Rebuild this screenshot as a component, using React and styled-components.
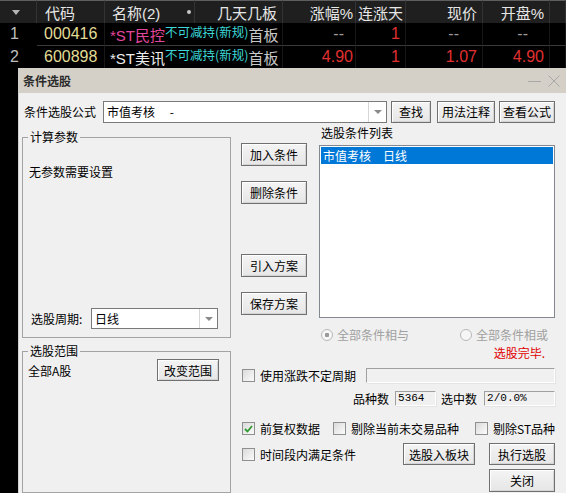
import React from 'react';
import styled, { createGlobalStyle } from 'styled-components';

const GlobalStyle = createGlobalStyle`
  html, body {
    margin: 0;
    padding: 0;
    background: #000;
    overflow: hidden;
  }
  body {
    font-family: 'Noto Sans CJK SC', 'Liberation Sans', sans-serif;
  }
`;

const Page = styled.div`
  position: relative;
  width: 566px;
  height: 493px;
  background: #000;
  overflow: hidden;
`;

/* ---------- quote table ---------- */

const COLS = '37px 68px 90px 88px 73px 50px 77px 67px 1fr';

const Table = styled.div`
  display: grid;
  grid-template-columns: ${COLS};
  font-family: 'Liberation Sans', 'Noto Sans CJK SC', sans-serif;
`;

const HeadCell = styled.div`
  box-sizing: border-box;
  height: 23px;
  background: #1f1f1f;
  border-top: 1px solid #5e5e5e;
  border-right: 1px solid #333;
  color: #e6e6e6;
  font-size: 15px;
  display: flex;
  align-items: center;
  justify-content: ${(p) => p.$align || 'flex-end'};
  padding: 0 ${(p) => (p.$pr != null ? p.$pr : 5)}px 0 ${(p) => (p.$pl != null ? p.$pl : 5)}px;
  white-space: nowrap;
`;

const SortArrow = styled.span`
  width: 0;
  height: 0;
  border-left: 4px solid transparent;
  border-right: 4px solid transparent;
  border-top: 5px solid #b4b4b4;
`;

const Dot = styled.span`
  width: 4px;
  height: 4px;
  border-radius: 50%;
  background: #c8c8c8;
`;

const Cell = styled.div`
  box-sizing: border-box;
  height: 23px;
  border-bottom: 1px solid ${(p) => (p.$first ? 'transparent' : '#3a3a3a')};
  border-right: 1px solid ${(p) => (p.$first ? 'transparent' : '#181818')};
  color: ${(p) => p.$color || '#e03030'};
  font-size: 16px;
  display: flex;
  align-items: center;
  justify-content: ${(p) => p.$align || 'flex-end'};
  padding: 0 ${(p) => (p.$pr != null ? p.$pr : 5)}px 0 ${(p) => (p.$pl != null ? p.$pl : 0)}px;
  white-space: nowrap;
  grid-column: ${(p) => (p.$span ? `span ${p.$span}` : 'auto')};
`;

const StockName = styled.span`
  font-size: 15px;
  color: ${(p) => p.$color};
`;

const Tag = styled.span`
  align-self: flex-start;
  margin-top: 1px;
  font-size: 12.5px;
  line-height: 15px;
  color: #3cd6d6;
  font-family: 'Noto Sans CJK SC', sans-serif;
`;

const Board = styled.span`
  margin-left: auto;
  font-size: 15px;
  color: #c8c8c8;
`;

const Dash = styled.span`
  color: #9a9a9a;
  margin-right: ${(p) => p.$mr}px;
`;

/* ---------- dialog ---------- */

const Dialog = styled.div`
  position: absolute;
  left: 18px;
  top: 68px;
  width: 548px;
  height: 425px;
  box-sizing: border-box;
  background: #f0f0f0;
  border-left: 1px solid #d0d0d0;
  font-family: 'Noto Sans CJK SC', sans-serif;
  font-size: 12px;
  color: #000;
`;

const TitleBar = styled.div`
  height: 25px;
  background: #d4d0c8;
  display: flex;
  align-items: center;
  padding: 0 6px 0 4px;
`;

const Title = styled.span`
  font-weight: bold;
  color: #2a2a2a;
  font-size: 12px;
`;

const WinControls = styled.div`
  margin-left: auto;
  display: flex;
  align-items: center;
  gap: 7px;
`;

const Body = styled.div`
  padding: 7px 11px 0 3px;
`;

const FormulaRow = styled.div`
  display: flex;
  align-items: center;
  height: 23px;
`;

const FieldLabel = styled.span`
  width: ${(p) => p.$w}px;
  padding-left: ${(p) => p.$pl || 0}px;
  box-sizing: border-box;
  line-height: 14px;
  white-space: nowrap;
`;

const Combo = styled.div`
  box-sizing: border-box;
  width: ${(p) => p.$w}px;
  height: ${(p) => p.$h}px;
  background: #fff;
  border: 1px solid #7a7a7a;
  display: flex;
  margin-right: ${(p) => p.$mr || 0}px;
`;

const ComboText = styled.span`
  flex: 1;
  padding-left: 3px;
  display: flex;
  align-items: center;
  white-space: pre;
`;

const ComboDrop = styled.span`
  width: 17px;
  border-left: 1px solid #d6d6d6;
  display: flex;
  align-items: center;
  justify-content: center;
  &::after {
    content: '';
    border-left: 4px solid transparent;
    border-right: 4px solid transparent;
    border-top: 4px solid #8a8a8a;
  }
`;

const Button = styled.button`
  box-sizing: border-box;
  width: ${(p) => p.$w}px;
  height: ${(p) => p.$h || 22}px;
  margin: 0 0 0 ${(p) => p.$ml || 0}px;
  padding: 0;
  font-family: 'Noto Sans CJK SC', sans-serif;
  font-size: 12px;
  color: #000;
  background: linear-gradient(#f4f4f4, #e6e6e6);
  border: 1px solid #707070;
  box-shadow: inset 1px 1px 0 #fff, inset -1px -1px 0 #d4d4d4;
  display: flex;
  align-items: center;
  justify-content: center;
  flex-shrink: 0;
`;

const Main = styled.div`
  display: grid;
  grid-template-columns: 209px 1fr;
  column-gap: 10px;
`;

const LeftCol = styled.div`
  padding-top: 7px;
`;

const Group = styled.fieldset`
  margin: ${(p) => p.$mt || 0}px 0 0 0;
  padding: 0 5px;
  border: 1px solid #a3a3a3;
  min-width: 0;
`;

const Legend = styled.legend`
  padding: 0 2px;
  font-size: 12px;
  line-height: 14px;
`;

const GroupInner = styled.div`
  height: ${(p) => p.$h}px;
  display: flex;
  flex-direction: column;
  box-sizing: border-box;
  padding: ${(p) => p.$pt}px 0 ${(p) => p.$pb || 0}px 0;
`;

const Note = styled.div`
  line-height: 14px;
  padding-left: 1px;
`;

const PeriodRow = styled.div`
  margin-top: auto;
  display: flex;
  align-items: center;
  padding-left: 3px;
`;

const RangeRow = styled.div`
  margin-top: 1px;
  display: flex;
  align-items: center;
  justify-content: space-between;
  padding-right: 6px;
`;

const RightCol = styled.div`
  display: flex;
  flex-direction: column;
`;

const TopSection = styled.div`
  display: grid;
  grid-template-columns: 66px 1fr;
  column-gap: 12px;
`;

const ButtonStack = styled.div`
  padding-top: 20px;
  display: flex;
  flex-direction: column;
`;

const StackGap = styled.div`
  height: ${(p) => p.$h}px;
`;

const ListCol = styled.div`
  padding-top: 3px;
`;

const ListLabel = styled.div`
  line-height: 14px;
  padding-left: 2px;
`;

const ListBox = styled.div`
  box-sizing: border-box;
  margin-top: 5px;
  height: 173px;
  background: #fff;
  border: 1px solid #828790;
  padding: 1px;
`;

const ListItem = styled.div`
  height: 17px;
  background: ${(p) => (p.$selected ? '#0078d7' : 'transparent')};
  color: ${(p) => (p.$selected ? '#fff' : '#000')};
  display: flex;
  align-items: center;
  padding-left: 2px;
  white-space: pre;
`;

const RadioRow = styled.div`
  margin-top: 8px;
  height: 14px;
  display: grid;
  grid-template-columns: 139px auto;
  padding-left: 2px;
  margin-left: 78px;
`;

const Radio = styled.span`
  display: flex;
  align-items: center;
  gap: 4px;
  color: #a0a0a0;
  white-space: nowrap;
  &::before {
    content: '';
    box-sizing: border-box;
    width: 12px;
    height: 12px;
    border-radius: 50%;
    border: 1px solid #b8b8b8;
    background: ${(p) =>
      p.$on ? 'radial-gradient(circle, #9a9a9a 0 2px, #f6f6f6 2.5px)' : '#f6f6f6'};
  }
`;

const Status = styled.div`
  margin-top: 6px;
  line-height: 14px;
  text-align: right;
  padding-right: 10px;
  color: #e00000;
`;

const Row = styled.div`
  margin-top: ${(p) => p.$mt}px;
  height: ${(p) => p.$h || 14}px;
  display: flex;
  align-items: center;
  justify-content: ${(p) => p.$justify || 'flex-start'};
  padding-left: ${(p) => p.$pl || 0}px;
`;

const CheckRow = styled.div`
  margin-top: 14px;
  height: 14px;
  display: grid;
  grid-template-columns: 91px 142px auto;
  align-items: center;
  padding-left: 1px;
`;

const ActionRow = styled.div`
  margin-top: 9px;
  height: 22px;
  display: grid;
  grid-template-columns: 1fr 72px 66px;
  column-gap: 14px;
  align-items: center;
  padding-left: 1px;
`;

const CheckLabel = styled.span`
  display: flex;
  align-items: center;
  gap: 5px;
  white-space: nowrap;
`;

const Box = styled.span`
  box-sizing: border-box;
  width: 13px;
  height: 13px;
  flex-shrink: 0;
  border: 1px solid #8e8f8f;
  background: linear-gradient(135deg, #dadada, #fbfbfb);
  display: flex;
  align-items: center;
  justify-content: center;
`;

const Sunken = styled.span`
  box-sizing: border-box;
  height: 15px;
  width: ${(p) => (p.$w ? `${p.$w}px` : 'auto')};
  flex: ${(p) => (p.$grow ? 1 : 'none')};
  margin-left: ${(p) => p.$ml || 0}px;
  background: #f0f0f0;
  border-top: 1px solid #a0a0a0;
  border-left: 1px solid #a0a0a0;
  border-bottom: 1px solid #fff;
  border-right: 1px solid #fff;
  box-shadow: 1px 1px 0 #e4e4e4;
  font-family: 'Liberation Mono', monospace;
  font-size: 11px;
  line-height: 13px;
  padding-left: 2px;
`;

const CountLabel = styled.span`
  margin-left: ${(p) => p.$ml || 0}px;
  line-height: 14px;
`;

const Checkbox = ({ checked, children }) => (
  <CheckLabel>
    <Box>
      {checked && (
        <svg width="9" height="8" viewBox="0 0 9 8">
          <polyline points="1,4 3.5,6.5 8,1" fill="none" stroke="#2f9a2f" strokeWidth="1.8" />
        </svg>
      )}
    </Box>
    {children}
  </CheckLabel>
);

const rows = [
  { idx: '1', code: '000416', name: '*ST民控', nameColor: '#e2469c', chg: null, days: '1', price: null, open: null },
  { idx: '2', code: '600898', name: '*ST美讯', nameColor: '#ececec', chg: '4.90', days: '1', price: '1.07', open: '4.90' },
];

export default function App() {
  return (
    <Page>
      <GlobalStyle />
      <Table>
        <HeadCell $align="center" $pl={0} $pr={4}><SortArrow /></HeadCell>
        <HeadCell $align="flex-start" $pl={8}>代码</HeadCell>
        <HeadCell $align="space-between" $pl={7} $pr={3}>名称(2)<Dot /></HeadCell>
        <HeadCell>几天几板</HeadCell>
        <HeadCell $pr={2}>涨幅%</HeadCell>
        <HeadCell $pr={2} $pl={1}>连涨天</HeadCell>
        <HeadCell>现价</HeadCell>
        <HeadCell>开盘%</HeadCell>
        <HeadCell />
        {rows.map((r) => (
          <React.Fragment key={r.idx}>
            <Cell $first $align="flex-start" $pl={10} $color="#bdbdbd">{r.idx}</Cell>
            <Cell $align="flex-start" $pl={7} $color="#e2dc96">{r.code}</Cell>
            <Cell $span={2} $align="flex-start" $pl={5}>
              <StockName $color={r.nameColor}>{r.name}</StockName>
              <Tag>不可减持(新规)</Tag>
              <Board>首板</Board>
            </Cell>
            <Cell $pr={2}>{r.chg || <Dash $mr={9}>--</Dash>}</Cell>
            <Cell>{r.days}</Cell>
            <Cell>{r.price || <Dash $mr={18}>--</Dash>}</Cell>
            <Cell>{r.open || <Dash $mr={16}>--</Dash>}</Cell>
            <Cell />
          </React.Fragment>
        ))}
      </Table>

      <Dialog>
        <TitleBar>
          <Title>条件选股</Title>
          <WinControls>
            <svg width="13" height="12" viewBox="0 0 13 12">
              <line x1="0" y1="6.5" x2="13" y2="6.5" stroke="#a8a8a8" strokeWidth="1" />
            </svg>
            <svg width="12" height="12" viewBox="0 0 12 12">
              <line x1="0.5" y1="0.5" x2="11.5" y2="11.5" stroke="#a8a8a8" strokeWidth="1" />
              <line x1="11.5" y1="0.5" x2="0.5" y2="11.5" stroke="#a8a8a8" strokeWidth="1" />
            </svg>
          </WinControls>
        </TitleBar>

        <Body>
          <FormulaRow>
            <FieldLabel $w={81} $pl={2}>条件选股公式</FieldLabel>
            <Combo $w={284} $h={22} $mr={4}>
              <ComboText>{'市值考核\u3000 -'}</ComboText>
              <ComboDrop />
            </Combo>
            <Button $w={40}>查找</Button>
            <Button $w={58} $ml={6}>用法注释</Button>
            <Button $w={56} $ml={4}>查看公式</Button>
          </FormulaRow>

          <Main>
            <LeftCol>
              <Group>
                <Legend>计算参数</Legend>
                <GroupInner $h={193} $pt={21} $pb={8}>
                  <Note>无参数需要设置</Note>
                  <PeriodRow>
                    <FieldLabel $w={60}>选股周期:</FieldLabel>
                    <Combo $w={127} $h={21}>
                      <ComboText>日线</ComboText>
                      <ComboDrop />
                    </Combo>
                  </PeriodRow>
                </GroupInner>
              </Group>
              <Group $mt={6}>
                <Legend>选股范围</Legend>
                <GroupInner $h={134} $pt={0}>
                  <RangeRow>
                    <span>全部A股</span>
                    <Button $w={62}>改变范围</Button>
                  </RangeRow>
                </GroupInner>
              </Group>
            </LeftCol>

            <RightCol>
              <TopSection>
                <ButtonStack>
                  <Button $w={66} $h={23}>加入条件</Button>
                  <StackGap $h={15} />
                  <Button $w={66} $h={23}>删除条件</Button>
                  <StackGap $h={50} />
                  <Button $w={66} $h={23}>引入方案</Button>
                  <StackGap $h={15} />
                  <Button $w={66} $h={23}>保存方案</Button>
                </ButtonStack>
                <ListCol>
                  <ListLabel>选股条件列表</ListLabel>
                  <ListBox>
                    <ListItem $selected>{'市值考核\u3000日线'}</ListItem>
                  </ListBox>
                </ListCol>
              </TopSection>

              <RadioRow>
                <Radio $on>全部条件相与</Radio>
                <Radio>全部条件相或</Radio>
              </RadioRow>

              <Status>选股完毕.</Status>

              <Row $mt={8} $pl={1}>
                <Checkbox>使用涨跌不定周期</Checkbox>
                <Sunken $grow $ml={10} />
              </Row>

              <Row $mt={9} $h={15} $justify="flex-end">
                <CountLabel>品种数</CountLabel>
                <Sunken $w={41} $ml={6}>5364</Sunken>
                <CountLabel $ml={5}>选中数</CountLabel>
                <Sunken $w={71} $ml={7}>2/0.0%</Sunken>
              </Row>

              <CheckRow>
                <Checkbox checked>前复权数据</Checkbox>
                <Checkbox>剔除当前未交易品种</Checkbox>
                <Checkbox>剔除ST品种</Checkbox>
              </CheckRow>

              <ActionRow>
                <Checkbox>时间段内满足条件</Checkbox>
                <Button $w={72}>选股入板块</Button>
                <Button $w={66}>执行选股</Button>
              </ActionRow>

              <Row $mt={4} $h={23} $justify="flex-end">
                <Button $w={66} $h={23}>关闭</Button>
              </Row>
            </RightCol>
          </Main>
        </Body>
      </Dialog>
    </Page>
  );
}
